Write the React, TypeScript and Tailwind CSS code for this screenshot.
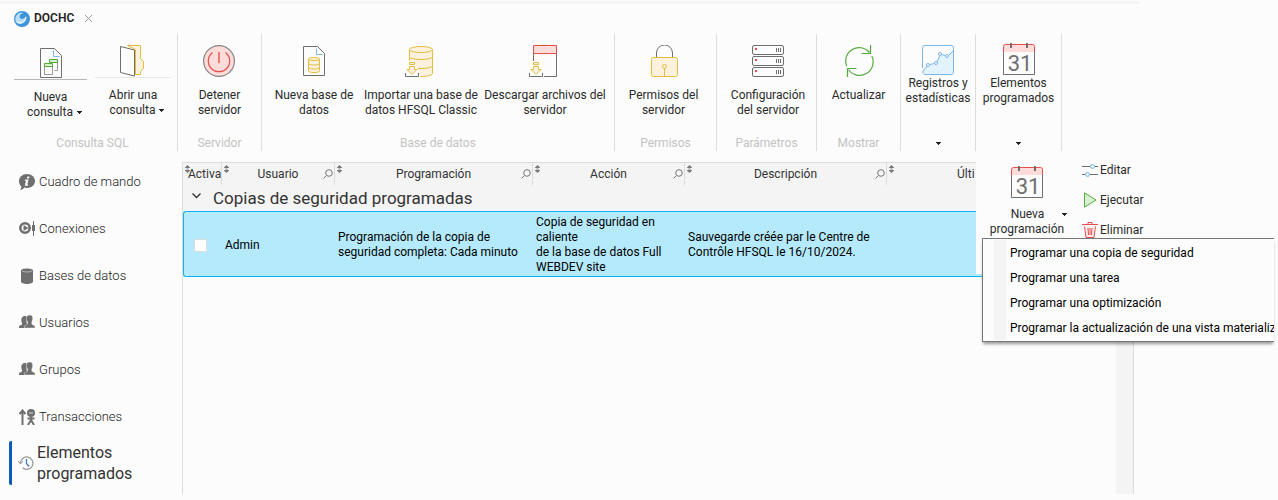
import React, { useState } from 'react';

const grey = '#6f6f6f';
const gold = '#e3bd3f';
const cream = '#fbf1dc';
const red = '#e5504c';
const green = '#56ab3f';

function Caret() {
  return (
    <svg width="5" height="3" viewBox="0 0 5 3" className="shrink-0" shapeRendering="crispEdges">
      <path d="M0 0h5v1H4v1H3v1H2V2H1V1H0z" fill="#222" />
    </svg>
  );
}

function NewQueryIcon() {
  return (
    <svg width="32" height="30" viewBox="0 0 32 30" fill="none">
      <path d="M5.500.500h14l7 7v22h-21z" stroke={grey} />
      <path d="M18.500 2.500v6h6" stroke="#7db7ea" />
      <path d="M22.500 14.500v8h-3" stroke="#999" />
      <path d="M14.500 11.500h8v3h-8z" fill="#d9efd2" stroke={green} />
      <path d="M9.500 18.500h8v8h-8z" fill="#fcfcfc" stroke="#999" />
      <path d="M9.500 15.500h8v3h-8z" fill="#d9efd2" stroke={green} />
    </svg>
  );
}

function OpenIcon() {
  return (
    <svg width="32" height="32" viewBox="0 0 32 32" fill="none">
      <path d="M10.500.500h13v13l3 3v7l-3 3v3h-5v-25z" fill={cream} stroke={gold} />
      <path d="M3.500 1.500l14 3.500v26l-14-3.500z" fill="#fcfcfc" stroke={grey} />
    </svg>
  );
}

function PowerIcon() {
  return (
    <svg width="32" height="32" viewBox="0 0 32 32" fill="none">
      <circle cx="16" cy="16" r="15.400" fill="#fddcda" stroke="#858585" strokeWidth="1.200" />
      <path d="M9.500 7.500a10.700 10.700 0 1 0 13 0" stroke={red} strokeWidth="1.200" />
      <path d="M16 7v11" stroke={red} strokeWidth="1.400" />
    </svg>
  );
}

function NewBaseIcon() {
  return (
    <svg width="32" height="32" viewBox="0 0 32 32" fill="none">
      <path d="M5.500 1.500h14l7 7v22h-21z" stroke={grey} />
      <path d="M18.500 3.500v6h6" stroke="#7db7ea" />
      <g fill={cream} stroke={gold}>
        <path d="M10.500 14v12c0 2 11 2 11 0V14" />
        <ellipse cx="16" cy="14" rx="5.500" ry="1.500" />
        <path d="M10.500 18.500c0 2 11 2 11 0M10.500 22.500c0 2 11 2 11 0" />
      </g>
    </svg>
  );
}

function DownloadMark() {
  return (
    <>
      <path d="M0 16h9l6 12v4H0z" fill="#fcfcfc" />
      <path d="M.500 28v3.500h13V28" stroke={grey} />
      <path d="M4.500 17.500h5v2h-5zM4.500 21.500h5v3h2.500l-5 5-5-5h2.500z" fill={cream} stroke={gold} />
    </>
  );
}

function ImportIcon() {
  return (
    <svg width="32" height="32" viewBox="0 0 32 32" fill="none">
      <g stroke={gold}>
        <path d="M4.500 4.500v24c0 4 23 4 23 0v-24" fill={cream} />
        <ellipse cx="16" cy="4.500" rx="11.500" ry="3" fill={cream} />
        <path d="M4.500 11.500c0 4 23 4 23 0M4.500 20.500c0 4 23 4 23 0" />
      </g>
      <DownloadMark />
    </svg>
  );
}

function DownloadFilesIcon() {
  return (
    <svg width="32" height="32" viewBox="0 0 32 32" fill="none">
      <path d="M4.500 8.500h23v23h-23z" stroke={grey} />
      <path d="M4.500.500h23v8h-23z" fill="#fddcda" stroke={red} />
      <DownloadMark />
    </svg>
  );
}

function LockIcon() {
  return (
    <svg width="32" height="32" viewBox="0 0 32 32" fill="none">
      <path d="M8.500 12.500V8a8 8 0 0 1 16 0v4.500" stroke={grey} />
      <rect x="3.500" y="12.500" width="26" height="19" rx="2" fill={cream} stroke={gold} />
      <circle cx="16.500" cy="21.500" r="2" stroke={gold} />
      <path d="M16.500 23.500v8" stroke={gold} />
    </svg>
  );
}

function ServerIcon() {
  return (
    <svg width="32" height="32" viewBox="0 0 32 32" fill="none">
      {[0, 11, 22].map((y) => (
        <g key={y}>
          <rect x=".5" y={y + 0.5} width="31" height="9" rx="1.500" stroke={grey} />
          <path d={`M3 ${y + 3}h2v2H3z`} fill={red} />
          <path d={`M24.500 ${y + 3}v4M26.500 ${y + 3}v4M28.500 ${y + 3}v4`} stroke={grey} />
        </g>
      ))}
    </svg>
  );
}

function RefreshIcon() {
  return (
    <svg width="32" height="32" viewBox="0 0 32 32" fill="none" stroke={green} strokeWidth="1.200">
      <path d="M3.500 21a13.500 13.500 0 0 1 23-13.500M28.800 11a13.500 13.500 0 0 1-23.300 13.500" />
      <path d="M27.500 0v8.500h-9M4.500 32v-8.500h9" />
    </svg>
  );
}

function StatsIcon() {
  return (
    <svg width="32" height="30" viewBox="0 0 32 30" fill="none" stroke="#7db7ea">
      <path d="M1 26l5-6 8-2 4-9 7 2 6-5v21a2 2 0 0 1-2 2H3z" fill="#e2f3fc" stroke="none" />
      <path d="M.500 23V3A2.500 2.500 0 0 1 3 .500h26A2.500 2.500 0 0 1 31.500 3v24a2.500 2.500 0 0 1-2.500 2.500H3a2.500 2.500 0 0 1-2-3.500l4-5M7.500 19.500l5-1M15 17l3-7M19.500 9.500l4 1M26.500 10.500l5-5" />
      <g fill="#fcfcfc">
        <circle cx="6" cy="20" r="1.500" />
        <circle cx="14" cy="18" r="1.500" />
        <circle cx="18" cy="9" r="1.500" />
        <circle cx="25" cy="11" r="1.500" />
      </g>
    </svg>
  );
}

function CalendarIcon() {
  return (
    <svg width="32" height="32" viewBox="0 0 32 32" fill="none" className="overflow-visible">
      <path d="M.500 9v22.500h31V9" stroke={grey} />
      <path d="M.500 9V3.500a2 2 0 0 1 2-2h27a2 2 0 0 1 2 2V9" fill="#fddcda" stroke={red} />
      <path d="M8 0v5M24 0v5" stroke={grey} strokeWidth="2" />
      <text x="17" y="28" textAnchor="middle" fontFamily="Roboto, sans-serif" fontSize="22" fill="#6f6f6f">31</text>
    </svg>
  );
}

type RibbonButtonProps = { icon: React.ReactNode; lines: string[]; className?: string };

function RibbonButton({ icon, lines, className = '' }: RibbonButtonProps) {
  return (
    <button type="button" className={`flex flex-col items-center ${className}`}>
      <span className="mb-[11px]">{icon}</span>
      {lines.map((line) => (
        <span key={line} className="whitespace-nowrap">{line}</span>
      ))}
    </button>
  );
}

type RibbonGroupProps = { label: string; className: string; children: React.ReactNode };

function RibbonGroup({ label, className, children }: RibbonGroupProps) {
  return (
    <div className={`flex shrink-0 flex-col justify-between border-r border-[#dcdcdc] ${className}`}>
      <div className="flex justify-center pt-[11px]">{children}</div>
      <div className="text-center text-[#c3c3c3]">{label}</div>
    </div>
  );
}

function InfoIcon() {
  return (
    <svg width="16" height="16" viewBox="0 0 16 16">
      <path d="M8 0c4.500 0 8 3 8 7s-3.500 7-8 7c-1 0-2-.2-2.800-.4C4.500 15 3 16 1 16c1-.8 1.400-2 1.300-3.500C.8 11.200 0 9.300 0 7c0-4 3.500-7 8-7z" fill={grey} />
      <path d="M8.300 2.500h2.200L10 4.500H7.900zM6 5.500h3.500L8.300 10.500h1L9 11.700H5.800L7 6.700H5.800z" fill="#fff" />
    </svg>
  );
}

function ConnectionIcon() {
  return (
    <svg width="16" height="16" viewBox="0 0 16 16">
      <circle cx="6" cy="7" r="4.700" fill="none" stroke={grey} strokeWidth="2.600" />
      <path d="M4.500 4l5 3-5 3zM14 0h1v4h1v6h-1v5h-1v-5h-1V4h1z" fill={grey} />
    </svg>
  );
}

function DatabaseIcon() {
  return (
    <svg width="16" height="16" viewBox="0 0 16 16">
      <path d="M2 2.500C2-.3 14-.3 14 2.500v11c0 3.300-12 3.300-12 0z" fill={grey} />
      <path d="M3 2.800c2 1.600 8 1.600 10 0" fill="none" stroke="#c8c8c8" strokeWidth=".8" />
    </svg>
  );
}

function UsersIcon() {
  return (
    <svg width="16" height="16" viewBox="0 0 16 16" fill={grey}>
      <path d="M5.500 1C8 .5 8.500 3 7.500 6v2l1 1v4H0v-2l3-1.500V8C1.800 5.500 2 1.500 5.500 1z" />
      <path d="M10.500 0c3.500 0 4 3.500 2.300 7v2.300L16 11v2H5.500v-2L8.500 9.300V7C6.500 3.500 7.500 0 10.500 0z" stroke="#fcfcfc" strokeWidth=".4" />
    </svg>
  );
}

function TransactionIcon() {
  return (
    <svg width="16" height="16" viewBox="0 0 16 16" fill="none" stroke={grey}>
      <path d="M3.500 16V2M.500 5l3-3.500 3 3.500" strokeWidth="2" />
      <circle cx="12" cy="4" r="4" fill={grey} stroke="none" />
      <path d="M10 4h4" stroke="#ddd" />
      <path d="M12 8v4M8.500 9.500h7M12 11l-3 5M12 11l3 5" strokeWidth="2" />
    </svg>
  );
}

function HistoryIcon() {
  return (
    <svg width="16" height="16" viewBox="0 0 16 16" fill="none" stroke="#999">
      <path d="M2.500 8.500a6.200 6.200 0 1 1 2 4.200" strokeWidth="1.300" />
      <path d="M0 6l2.500 3L5 6" />
      <path d="M8.500 4v4.500l2.500 3" stroke="#3f7fc0" strokeWidth="1.300" />
    </svg>
  );
}

const sections = [
  { label: 'Cuadro de mando', icon: <InfoIcon /> },
  { label: 'Conexiones', icon: <ConnectionIcon /> },
  { label: 'Bases de datos', icon: <DatabaseIcon /> },
  { label: 'Usuarios', icon: <UsersIcon /> },
  { label: 'Grupos', icon: <UsersIcon /> },
  { label: 'Transacciones', icon: <TransactionIcon /> },
];

const columns = [
  { label: 'Activa', search: false, className: 'pl-[5px] text-center' },
  { label: 'Usuario', search: true, className: 'text-center' },
  { label: 'Programación', search: true, className: 'text-center' },
  { label: 'Acción', search: true, className: 'text-center' },
  { label: 'Descripción', search: true, className: 'text-center' },
  { label: 'Últi', search: false, className: 'pl-[70px] text-left' },
];

const menu = [
  'Programar una copia de seguridad',
  'Programar una tarea',
  'Programar una optimización',
  'Programar la actualización de una vista materializa',
];

function SortIcon() {
  return (
    <svg width="5" height="8" viewBox="0 0 5 8" className="absolute top-[2px] left-[2px]">
      <path d="M2.500 0L5 2.500V3H3.500v.500h-2V3H0v-.500zM2.500 8L5 5.500V5H3.500v-.500h-2V5H0v.500z" fill="#777" />
    </svg>
  );
}

function SearchIcon() {
  return (
    <svg width="10" height="10" viewBox="0 0 10 10" fill="none" stroke="#777" className="absolute top-[6px] right-[1px]">
      <circle cx="6" cy="4" r="3.300" />
      <path d="M3.500 6.500L.500 9.500" />
    </svg>
  );
}

function ScheduleTable() {
  const [active, setActive] = useState(false);
  const cell = 'border-y border-[#12b2f2] bg-[#b5e9fc] px-[3px] pt-[2px] pb-0 text-left whitespace-nowrap';

  return (
    <table className="w-full table-fixed border-separate border-spacing-0 text-black">
      <colgroup>
        <col className="w-[39px]" />
        <col className="w-[113px]" />
        <col className="w-[198px]" />
        <col className="w-[152px]" />
        <col className="w-[202px]" />
        <col />
      </colgroup>
      <thead>
        <tr className="h-[22px] bg-[#f4f4f4] text-[#333]">
          {columns.map((column) => (
            <th key={column.label} className="relative border-r border-[#dcdcdc] p-0 font-normal last:border-r-0">
              <SortIcon />
              <div className={column.className}>{column.label}</div>
              {column.search && <SearchIcon />}
            </th>
          ))}
        </tr>
      </thead>
      <tbody>
        <tr className="h-[26px] bg-[#f4f4f4]">
          <th colSpan={6} className="p-0 text-left font-normal">
            <button type="button" className="flex items-center gap-3 pl-[9px] text-[17px] leading-6 text-[#333]">
              <svg width="9" height="6" viewBox="0 0 9 6" fill="none" stroke="#333" strokeWidth="1.300" className="mb-1">
                <path d="M.500.500l4 4 4-4" />
              </svg>
              Copias de seguridad programadas
            </button>
          </th>
        </tr>
        <tr className="h-[66px]">
          <td className={`rounded-l-[3px] border-l ${cell}`}>
            <input
              type="checkbox"
              aria-label="Activa"
              checked={active}
              onChange={(e) => setActive(e.target.checked)}
              className="ml-[7px] block size-[13px] appearance-none border border-[#dcdcdc] bg-white checked:bg-[#0a5cb5]"
            />
          </td>
          <td className={cell}>Admin</td>
          <td className={cell}>Programación de la copia de<br />seguridad completa: Cada minuto</td>
          <td className={cell}>Copia de seguridad en<br />caliente<br />de la base de datos Full<br />WEBDEV site</td>
          <td className={cell}>Sauvegarde créée par le Centre de<br />Contrôle HFSQL le 16/10/2024.</td>
          <td className={`rounded-r-[3px] border-r ${cell}`}></td>
        </tr>
      </tbody>
    </table>
  );
}

function SchedulePanel() {
  return (
    <div className="absolute top-[152px] right-0 left-[976px] h-[122px] bg-[#fcfcfc]">
      <div className="flex">
        <button type="button" className="ml-[13px] flex w-[76px] flex-col items-center pt-[14px]">
          <CalendarIcon />
          <span className="mt-[9px] flex items-center gap-[18px] pl-6">Nueva<Caret /></span>
          <span>programación</span>
        </button>
        <div className="ml-[17px] flex flex-col pt-[3px]">
          <button type="button" className="flex h-[30px] items-center gap-[2px]">
            <svg width="16" height="16" viewBox="0 0 16 16" fill="none" stroke={grey}>
              <path d="M0 4.500h8M13 4.500h3M0 12.500h3M8 12.500h8" />
              <circle cx="10.500" cy="4.500" r="2" fill="#e2f3fc" stroke="#7db7ea" />
              <circle cx="5.500" cy="12.500" r="2" fill="#e2f3fc" stroke="#7db7ea" />
            </svg>
            Editar
          </button>
          <button type="button" className="flex h-[30px] items-center gap-[2px]">
            <svg width="16" height="16" viewBox="0 0 16 16">
              <path d="M2.500.800L14 8 2.500 15.200z" fill="#d9efd2" stroke={green} />
            </svg>
            Ejecutar
          </button>
          <button type="button" className="flex h-[30px] items-center gap-[2px]">
            <svg width="16" height="16" viewBox="0 0 16 16" fill="none" stroke={red}>
              <path d="M0 2.500h16M6 2.500V.500h4v2" />
              <path d="M2.500 4.500l1.500 11h8l1.500-11" fill="#fdeceb" />
              <path d="M6 6l.5 7M8 6v7M10 6l-.5 7" />
            </svg>
            Eliminar
          </button>
        </div>
      </div>
      <div className="absolute top-[86px] right-1 left-[6px] overflow-hidden border-y border-l border-[#777] bg-[#fcfcfc] pl-[11px] text-black shadow-[0_3px_3px_-1px_rgba(0,0,0,0.4)]">
        <div className="my-px border-l-12 border-[#f4f4f4]">
          {menu.map((item) => (
            <button key={item} type="button" className="block h-[25px] w-full pt-[2px] pl-1 text-left whitespace-nowrap">
              {item}
            </button>
          ))}
        </div>
      </div>
    </div>
  );
}

export default function App() {
  return (
    <div className="relative flex min-h-screen flex-col overflow-hidden bg-[#fcfcfc] pb-[6px] font-[Roboto,'Open_Sans',sans-serif] text-[12px] leading-[15px] text-[#2b2b2b]">
      <div className="mt-px mr-[139px] h-[3px] bg-[#f4f4f4]" />
      <div className="flex h-[30px] items-center gap-1 pb-px pl-[14px]">
        <svg width="16" height="16" viewBox="0 0 16 16">
          <circle cx="8" cy="8" r="8" fill="#3d93d9" />
          <path d="M2 11a6.500 6.500 0 0 1 8-9c-4 .5-5 3-4 5 1 2 5 1 6-2 1.500 4-2 8-6 8-1.500 0-3-.7-4-2z" fill="#b9e0f8" />
          <path d="M3 11c3 2 8 1 9-5" fill="none" stroke="#fff" />
        </svg>
        <span className="font-semibold text-[#222]">DOCHC</span>
        <button type="button" aria-label="Cerrar" className="ml-[7px]">
          <svg width="7" height="7" viewBox="0 0 7 7" stroke="#999">
            <path d="M0 0l7 7M7 0L0 7" />
          </svg>
        </button>
      </div>

      <div className="flex h-[117px] shrink-0">
        <RibbonGroup label="Consulta SQL" className="w-[178px] pl-2">
          <div className="flex items-start gap-2">
            <button type="button" className="flex w-[73px] flex-col items-center">
              <span className="mb-[10px] flex w-full justify-center border-b border-[#b8b8b8] pt-[3px] pb-px"><NewQueryIcon /></span>
              <span>Nueva</span>
              <span className="flex items-center gap-1 pl-2">consulta <Caret /></span>
            </button>
            <button type="button" className="flex w-[76px] flex-col items-center">
              <span className="mb-[10px] flex w-full justify-center border-b border-[#e8e8e8]"><OpenIcon /></span>
              <span>Abrir una</span>
              <span className="flex items-center gap-1 pl-2">consulta <Caret /></span>
            </button>
          </div>
        </RibbonGroup>
        <RibbonGroup label="Servidor" className="w-[84px]">
          <RibbonButton icon={<PowerIcon />} lines={['Detener', 'servidor']} />
        </RibbonGroup>
        <RibbonGroup label="Base de datos" className="w-[353px]">
          <RibbonButton icon={<NewBaseIcon />} lines={['Nueva base de', 'datos']} className="w-[98px]" />
          <RibbonButton icon={<ImportIcon />} lines={['Importar una base de', 'datos HFSQL Classic']} className="w-[116px]" />
          <RibbonButton icon={<DownloadFilesIcon />} lines={['Descargar archivos del', 'servidor']} className="w-[132px]" />
        </RibbonGroup>
        <RibbonGroup label="Permisos" className="w-[102px]">
          <RibbonButton icon={<LockIcon />} lines={['Permisos del', 'servidor']} className="pr-1" />
        </RibbonGroup>
        <RibbonGroup label="Parámetros" className="w-[100px]">
          <RibbonButton icon={<ServerIcon />} lines={['Configuración', 'del servidor']} className="pl-[3px]" />
        </RibbonGroup>
        <RibbonGroup label="Mostrar" className="w-[84px]">
          <RibbonButton icon={<RefreshIcon />} lines={['Actualizar']} />
        </RibbonGroup>
        <button type="button" className="flex w-[75px] shrink-0 flex-col items-center border-r border-[#dcdcdc] pt-[11px] pb-[6px]">
          <StatsIcon />
          <span className="mt-px">Registros y</span>
          <span>estadísticas</span>
          <span className="mt-auto"><Caret /></span>
        </button>
        <button type="button" className="flex w-[86px] shrink-0 flex-col items-center border-r border-[#dcdcdc] pt-[9px] pb-[6px]">
          <CalendarIcon />
          <span className="mt-px">Elementos</span>
          <span>programados</span>
          <span className="mt-auto"><Caret /></span>
        </button>
      </div>

      <div className="flex flex-1">
        <nav className="w-[182px] shrink-0 pt-[7px]">
          {sections.map((section) => (
            <a key={section.label} href="#" className="flex h-[47px] items-center gap-1 pl-[19px] text-[13px] font-light text-[#222]">
              {section.icon}
              {section.label}
            </a>
          ))}
          <a href="#" aria-current="page" className="mt-px ml-[9px] flex h-11 items-center gap-[3px] rounded-xs border-l-3 border-[#0a5cb5] pl-[6px] text-[16px] leading-[21px] text-[#333]">
            <HistoryIcon />
            <span>Elementos<br />programados</span>
          </a>
        </nav>
        <main className="mt-[11px] mr-[144px] flex flex-1 border border-b-0 border-[#dcdcdc]">
          <div className="flex-1">
            <ScheduleTable />
          </div>
          <div className="w-[17px] bg-[#f4f4f4]" />
        </main>
      </div>

      <SchedulePanel />
    </div>
  );
}
